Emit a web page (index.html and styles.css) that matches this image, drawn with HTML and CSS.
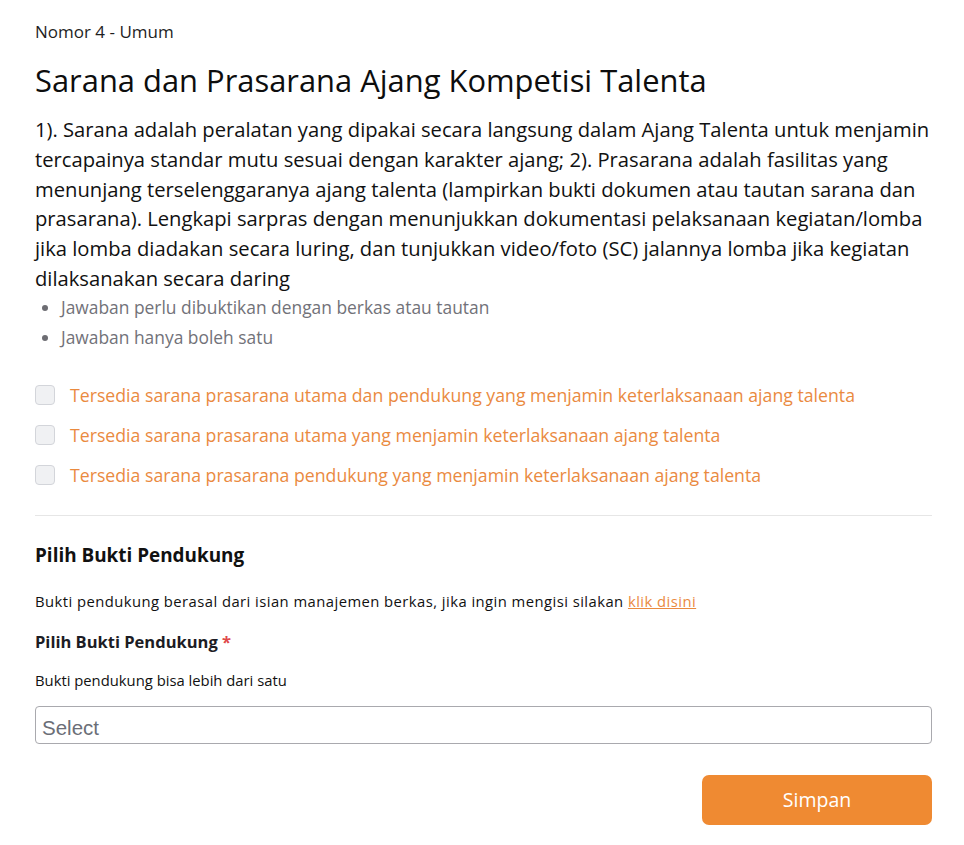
FILE: index.html
```html
<!DOCTYPE html>
<html lang="id">
<head>
<meta charset="utf-8">
<title>Sarana dan Prasarana</title>
<link rel="stylesheet" href="styles.css">
</head>
<body>
<main class="page">
  <div class="crumb">Nomor 4 - Umum</div>
  <h1 class="title">Sarana dan Prasarana Ajang Kompetisi Talenta</h1>
  <p class="desc">1). Sarana adalah peralatan yang dipakai secara langsung dalam Ajang Talenta untuk menjamin tercapainya standar mutu sesuai dengan karakter ajang; 2). Prasarana adalah fasilitas yang menunjang terselenggaranya ajang talenta (lampirkan bukti dokumen atau tautan sarana dan prasarana). Lengkapi sarpras dengan menunjukkan dokumentasi pelaksanaan kegiatan/lomba jika lomba diadakan secara luring, dan tunjukkan video/foto (SC) jalannya lomba jika kegiatan dilaksanakan secara daring</p>
  <ul class="notes">
    <li>Jawaban perlu dibuktikan dengan berkas atau tautan</li>
    <li>Jawaban hanya boleh satu</li>
  </ul>
  <div class="options">
    <label class="option"><span class="box"></span><span>Tersedia sarana prasarana utama dan pendukung yang menjamin keterlaksanaan ajang talenta</span></label>
    <label class="option"><span class="box"></span><span>Tersedia sarana prasarana utama yang menjamin keterlaksanaan ajang talenta</span></label>
    <label class="option"><span class="box"></span><span>Tersedia sarana prasarana pendukung yang menjamin keterlaksanaan ajang talenta</span></label>
  </div>
  <hr class="divider">
  <h2 class="section">Pilih Bukti Pendukung</h2>
  <p class="small info">Bukti pendukung berasal dari isian manajemen berkas, jika ingin mengisi silakan <a href="#" class="link">klik disini</a></p>
  <div class="field-label">Pilih Bukti Pendukung <span class="req">*</span></div>
  <p class="small hint">Bukti pendukung bisa lebih dari satu</p>
  <div class="select">Select</div>
  <div class="actions"><button class="btn">Simpan</button></div>
</main>
</body>
</html>
```
FILE: styles.css
```css
html, body { margin: 0; padding: 0; background: #fff; }
body { font-family: "Open Sans", "Noto Sans", sans-serif; color: #111; }
.page { padding: 20px 32px 0 35px; }
.crumb { font-size: 17px; line-height: 24px; color: #1e1e1e; }
.title { font-size: 30.9px; font-weight: 500; line-height: 40px; margin: 16px 0 15px; color: #0d0d0d; }
.desc { font-size: 20.2px; line-height: 29.8px; margin: 0; color: #111; }
.notes { margin: -2px 0 0; padding: 0 0 0 26px; color: #727279; font-size: 17.4px; line-height: 30px; }
.notes li::marker { color: #6d6d73; }
.options { margin-top: 31px; display: flex; flex-direction: column; gap: 16px; }
.option { display: flex; align-items: center; gap: 15px; color: #ea8a3f; font-size: 17.7px; line-height: 24px; }
.box { box-sizing: border-box; width: 20px; height: 20px; border: 1px solid #d3d5da; border-radius: 4px; background: #f0f1f3; flex: none; }
.divider { border: 0; border-top: 1px solid #e6e6e6; margin: 28px 0 0; }
.section { font-size: 18.9px; font-weight: 700; margin: 26px 0 0; line-height: 26px; color: #111; }
.small { font-size: 14.8px; line-height: 20px; margin: 0; color: #111; }
.info { margin-top: 23px; letter-spacing: 0.45px; }
.link { color: #ea8a3f; }
.field-label { font-size: 16.5px; font-weight: 700; margin-top: 19px; line-height: 24px; color: #1c1c24; }
.req { color: #e0484a; }
.hint { margin-top: 16px; }
.select { box-sizing: border-box; margin-top: 16px; height: 38px; border: 1px solid #a9a9ae; border-radius: 4px; font-family: "Liberation Sans", Arial, sans-serif; font-size: 20.5px; color: #6b6e77; display: flex; align-items: center; padding: 6px 6px 0; }
.actions { display: flex; justify-content: flex-end; margin-top: 31px; }
.btn { width: 230px; height: 50px; background: #ef8a32; border: 0; border-radius: 7px; color: #fff; font-family: "Open Sans", "Noto Sans", sans-serif; font-size: 19.5px; }
```
